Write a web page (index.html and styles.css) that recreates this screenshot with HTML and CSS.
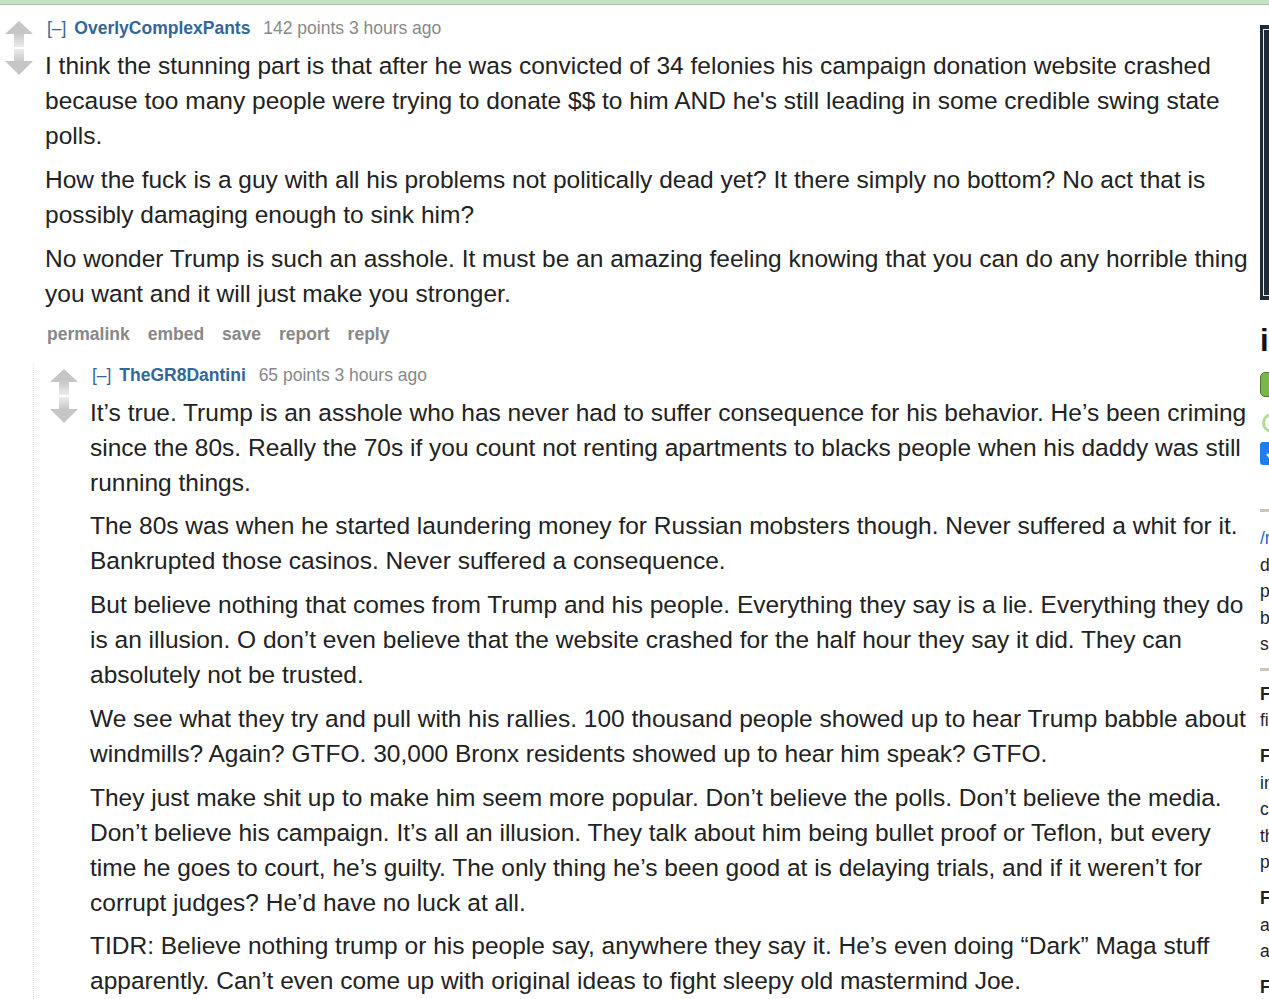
FILE: index.html
```html
<!DOCTYPE html>
<html lang="en">
<head>
    <meta charset="UTF-8">
    <meta name="viewport" content="width=device-width, initial-scale=1.0">
    <title>comments</title>
    <link rel="stylesheet" href="styles.css">
</head>
<body>
    <div class="top-bar"></div>

    <div class="page">
        <div class="content">

            <!-- parent comment -->
            <div class="comment">
                <div class="row">
                    <div class="midcol">
                        <svg class="arrow" width="28" height="26" viewBox="0 0 28 26">
                            <defs>
                                <linearGradient id="up1" x1="0" y1="0" x2="0" y2="1">
                                    <stop offset="0" stop-color="#c6c6c6"/>
                                    <stop offset="1" stop-color="#ececec"/>
                                </linearGradient>
                            </defs>
                            <polygon points="14,0 28,13 0,13" fill="#c6c6c6"/>
                            <rect x="9" y="12" width="10" height="14" fill="url(#up1)"/>
                        </svg>
                        <svg class="arrow" width="28" height="26" viewBox="0 0 28 26">
                            <defs>
                                <linearGradient id="down1" x1="0" y1="0" x2="0" y2="1">
                                    <stop offset="0" stop-color="#ececec"/>
                                    <stop offset="1" stop-color="#c6c6c6"/>
                                </linearGradient>
                            </defs>
                            <rect x="9" y="0" width="10" height="13" fill="url(#down1)"/>
                            <polygon points="0,12 28,12 14,26" fill="#c6c6c6"/>
                        </svg>
                    </div>
                    <div class="entry">
                        <p class="tagline">
                            <a class="expand">[–]</a>
                            <a class="author">OverlyComplexPants</a>
                            <span class="score">142 points 3 hours ago</span>
                        </p>
                        <div class="md">
                            <p>I think the stunning part is that after he was convicted of 34 felonies his campaign donation website crashed because too many people were trying to donate $$ to him AND he's still leading in some credible swing state polls.</p>
                            <p>How the fuck is a guy with all his problems not politically dead yet? It there simply no bottom? No act that is possibly damaging enough to sink him?</p>
                            <p>No wonder Trump is such an asshole. It must be an amazing feeling knowing that you can do any horrible thing you want and it will just make you stronger.</p>
                        </div>
                        <ul class="buttons">
                            <li>permalink</li>
                            <li>embed</li>
                            <li>save</li>
                            <li>report</li>
                            <li>reply</li>
                        </ul>
                    </div>
                </div>

                <div class="children">
                    <!-- reply -->
                    <div class="comment">
                        <div class="row">
                            <div class="midcol">
                                <svg class="arrow" width="28" height="26" viewBox="0 0 28 26">
                                    <defs>
                                        <linearGradient id="up2" x1="0" y1="0" x2="0" y2="1">
                                            <stop offset="0" stop-color="#c6c6c6"/>
                                            <stop offset="1" stop-color="#ececec"/>
                                        </linearGradient>
                                    </defs>
                                    <polygon points="14,0 28,13 0,13" fill="#c6c6c6"/>
                                    <rect x="9" y="12" width="10" height="14" fill="url(#up2)"/>
                                </svg>
                                <svg class="arrow" width="28" height="26" viewBox="0 0 28 26">
                                    <defs>
                                        <linearGradient id="down2" x1="0" y1="0" x2="0" y2="1">
                                            <stop offset="0" stop-color="#ececec"/>
                                            <stop offset="1" stop-color="#c6c6c6"/>
                                        </linearGradient>
                                    </defs>
                                    <rect x="9" y="0" width="10" height="13" fill="url(#down2)"/>
                                    <polygon points="0,12 28,12 14,26" fill="#c6c6c6"/>
                                </svg>
                            </div>
                            <div class="entry">
                                <p class="tagline">
                                    <a class="expand">[–]</a>
                                    <a class="author">TheGR8Dantini</a>
                                    <span class="score">65 points 3 hours ago</span>
                                </p>
                                <div class="md">
                                    <p>It’s true. Trump is an asshole who has never had to suffer consequence for his behavior. He’s been criming since the 80s. Really the 70s if you count not renting apartments to blacks people when his daddy was still running things.</p>
                                    <p>The 80s was when he started laundering money for Russian mobsters though. Never suffered a whit for it. Bankrupted those casinos. Never suffered a consequence.</p>
                                    <p>But believe nothing that comes from Trump and his people. Everything they say is a lie. Everything they do is an illusion. O don’t even believe that the website crashed for the half hour they say it did. They can absolutely not be trusted.</p>
                                    <p>We see what they try and pull with his rallies. 100 thousand people showed up to hear Trump babble about windmills? Again? GTFO. 30,000 Bronx residents showed up to hear him speak? GTFO.</p>
                                    <p>They just make shit up to make him seem more popular. Don’t believe the polls. Don’t believe the media. Don’t believe his campaign. It’s all an illusion. They talk about him being bullet proof or Teflon, but every time he goes to court, he’s guilty. The only thing he’s been good at is delaying trials, and if it weren’t for corrupt judges? He’d have no luck at all.</p>
                                    <p>TIDR: Believe nothing trump or his people say, anywhere they say it. He’s even doing “Dark” Maga stuff apparently. Can’t even come up with original ideas to fight sleepy old mastermind Joe.</p>
                                </div>
                            </div>
                        </div>
                    </div>
                </div>
            </div>

        </div>

        <div class="side">
            <div class="promo">
                <div class="promo-inner"></div>
            </div>

            <h2 class="side-title">in the news</h2>
            <div class="side-btn"></div>
            <div class="side-ring"></div>
            <div class="side-check">
                <svg width="14" height="14" viewBox="0 0 14 14">
                    <polyline points="2,7 6,11 12,3" fill="none" stroke="#fff" stroke-width="2.4"/>
                </svg>
            </div>

            <hr class="side-rule">
            <div class="side-text">
                <a class="side-link">/r/politics is for news</a>
                <div>discussion about U.S.</div>
                <div>politics, policy and</div>
                <div>bills before congress</div>
                <div>submission rules apply</div>
            </div>
            <hr class="side-rule">

            <div class="rules">
                <p><strong>Follow Reddiquette</strong><br>first and foremost</p>
                <p><strong>Fairness</strong><br>in titles is required<br>copy the headline<br>the article uses<br>please</p>
                <p><strong>Flair</strong><br>applies to<br>all posts</p>
                <p><strong>Familiar faces</strong></p>
            </div>
        </div>
    </div>
</body>
</html>
```

FILE: styles.css
```css
/* General Styles */
html,
body {
    overflow: hidden;
}

body {
    margin: 0;
    font-family: "Liberation Sans", Arial, sans-serif;
    color: #222;
    background-color: #fff;
}

.top-bar {
    height: 4px;
    background-color: #c6e2c6;
    border-bottom: 1px solid #a9c4a9;
}

.page {
    display: flex;
    width: 1560px;
}

.content {
    width: 1252px;
    flex-shrink: 0;
    padding-top: 12px;
}

/* Comments */
.row {
    display: flex;
}

.midcol {
    width: 45px;
    flex-shrink: 0;
    padding-left: 5px;
    padding-top: 4px;
    box-sizing: border-box;
}

.arrow {
    display: block;
    margin-bottom: 2px;
}

.entry {
    flex: 1;
    min-width: 0;
}

.tagline {
    margin: 0;
    padding-left: 2px;
    font-size: 17.5px;
    line-height: 22px;
    color: #888;
}

.tagline a {
    color: #369;
}

.expand {
    margin-right: 3px;
}

.author {
    font-weight: bold;
    margin-right: 8px;
}

.md {
    margin-top: 9px;
    font-size: 24.5px;
    line-height: 35px;
}

.md p {
    margin: 0 0 8.75px 0;
}

/* the last paragraph margin collapses into this one */
.buttons {
    list-style: none;
    margin: 12px 0 0 0;
    padding: 0 0 0 2px;
    display: flex;
    gap: 18px;
    font-size: 17.5px;
    line-height: 22px;
    font-weight: bold;
    color: #888;
}

.children {
    margin-top: 19px;
    margin-left: 33px;
    padding-left: 11px;
    border-left: 1px dotted #d4d4f2;
}

.children .midcol {
    padding-top: 5px;
}

/* Sidebar */
.side {
    width: 300px;
    flex-shrink: 0;
    margin-left: 8px;
    padding-top: 20px;
}

.promo {
    height: 275px;
    background-color: #1e2a38;
    padding: 4px 3px;
    box-sizing: border-box;
}

.promo-inner {
    height: 100%;
    border: 1px solid #e4e9ef;
    box-sizing: border-box;
}

.side-title {
    margin: 23px 0 0 0;
    font-size: 31px;
    line-height: 36px;
    font-weight: bold;
    color: #111;
}

.side-btn {
    margin-top: 13px;
    height: 25px;
    width: 120px;
    background-color: #7ab648;
    border: 1px solid #4e7a31;
    border-radius: 5px;
    box-sizing: border-box;
}

.side-ring {
    margin: 16px 0 0 2px;
    width: 20px;
    height: 20px;
    border: 3px solid #b4dc8c;
    border-radius: 50%;
    box-sizing: border-box;
}

.side-check {
    margin-top: 9px;
    width: 24px;
    height: 23px;
    background-color: #1f7df0;
    border-radius: 3px;
    display: flex;
    align-items: center;
    justify-content: center;
}

.side-rule {
    margin: 0;
    border: none;
    height: 3px;
    background-color: #cbc6b5;
}

.side-check + .side-rule {
    margin-top: 44px;
}

.side-text {
    padding: 13px 0 10px 0;
    font-size: 17.5px;
    line-height: 26.5px;
}

.side-link {
    display: block;
    color: #1a66d1;
}

.rules {
    font-size: 17.5px;
    line-height: 26.5px;
    padding-top: 10px;
}

.rules p {
    margin: 0 0 9.5px 0;
}
```
